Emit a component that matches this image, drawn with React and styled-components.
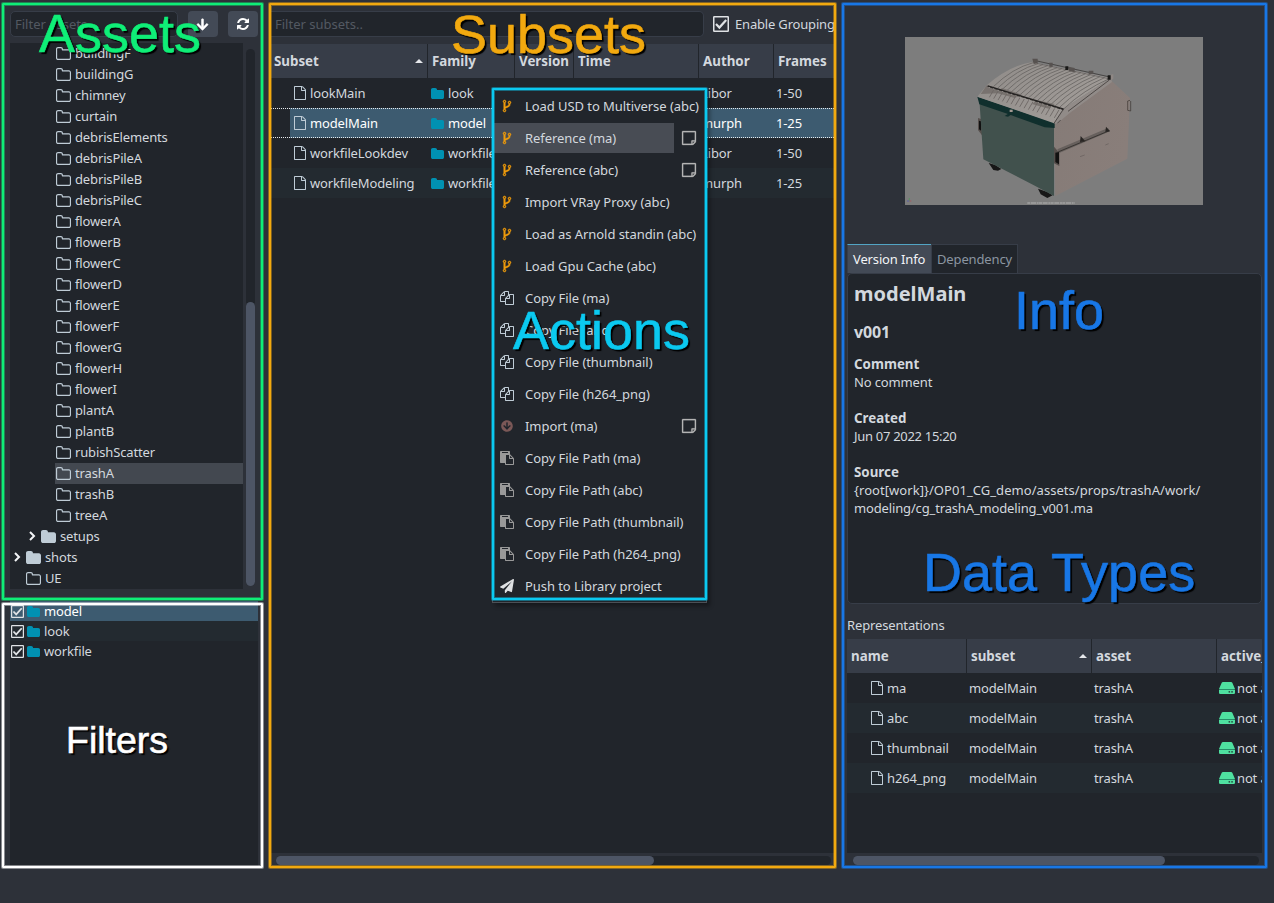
import React from "react";
import styled, { createGlobalStyle, css } from "styled-components";
import { FaArrowCircleDown, FaPaperPlane, FaArrowDown } from "react-icons/fa";

const c = {
  window: "#2d3139",
  view: "#21252b",
  alt: "#232a30",
  header: "#373d48",
  control: "#434a56",
  line: "#373d48",
  text: "#d3d8de",
  muted: "#535962",
  selected: "#3d5b70",
  hover: "#434850",
  icon: "#bfccd6",
  family: "#0091b2",
  scroll: "#4d5565",
};

const Global = createGlobalStyle`
  * { box-sizing: border-box; }
  body {
    margin: 0;
    background: ${c.window};
    color: ${c.text};
    font: 13px/18px "Noto Sans", sans-serif;
    letter-spacing: -0.14px;
    overflow: hidden;
  }
  svg { display: block; flex: none; }
`;

/* ---------- icons ---------- */

const PATHS = {
  folderLine: ["0 64 1664 1408", "M1536 1248V544q0-40-28-68t-68-28H736q-40 0-68-28t-28-68v-64q0-40-28-68t-68-28H224q-40 0-68 28t-28 68v960q0 40 28 68t68 28h1216q40 0 68-28t28-68zm128-704v704q0 92-66 158t-158 66H224q-92 0-158-66T0 1248V288q0-92 66-158T224 64h320q92 0 158 66t66 158v32h672q92 0 158 66t66 158z"],
  folder: ["0 64 1664 1408", "M1664 544v704q0 92-66 158t-158 66H224q-92 0-158-66T0 1248V288q0-92 66-158T224 64h320q92 0 158 66t66 158v32h672q92 0 158 66t66 158z"],
  file: ["0 0 1536 1792", "M1468 380q28 28 48 76t20 88v1152q0 40-28 68t-68 28H96q-40 0-68-28t-28-68V96q0-40 28-68T96 0h896q40 0 88 20t76 48zm-444-244v376h376q-10-29-22-41l-313-313q-12-12-41-22zm384 1528V640H992q-40 0-68-28t-28-68V128H128v1536h1280z"],
  refresh: ["0 0 1536 1536", "M1511 928q0 5-1 7-64 268-268 434.5T764 1536q-146 0-282.5-55T238 1324l-129 129q-19 19-45 19t-45-19T0 1408V960q0-26 19-45t45-19h448q26 0 45 19t19 45-19 45l-137 137q71 66 161 102t187 36q134 0 250-65t186-179q11-17 53-117 8-23 30-23h192q13 0 22.5 9.5t9.5 22.5zm25-800v448q0 26-19 45t-45 19h-448q-26 0-45-19t-19-45 19-45l138-138Q969 256 768 256q-134 0-250 65T332 500q-11 17-53 117-8 23-30 23H50q-13 0-22.5-9.5T18 608v-7q65-268 270-434.5T768 0q146 0 284 55.5T1297 212l130-129q19-19 45-19t45 19 19 45z"],
  fork: ["0 128 1024 1536", "M288 1472q0-40-28-68t-68-28-68 28-28 68 28 68 68 28 68-28 28-68zm0-1152q0-40-28-68t-68-28-68 28-28 68 28 68 68 28 68-28 28-68zm640 128q0-40-28-68t-68-28-68 28-28 68 28 68 68 28 68-28 28-68zm96 0q0 52-26 96.5T928 614q-2 287-226 414-67 38-203 81-128 40-169.5 71T288 1280v26q44 25 70 69.5t26 96.5q0 80-56 136t-136 56-136-56-56-136q0-52 26-96.5T96 1306V486q-44-25-70-69.5T0 320q0-80 56-136t136-56 136 56 56 136q0 52-26 96.5T288 486v497q54-26 154-57 55-17 87.5-29.5t70.5-31 59-39.5 40.5-51 28-69.5T736 614q-44-25-70-69.5T640 448q0-80 56-136t136-56 136 56 56 136z"],
  copy: ["0 0 1792 1792", "M1696 384q40 0 68 28t28 68v1216q0 40-28 68t-68 28H736q-40 0-68-28t-28-68v-288H96q-40 0-68-28t-28-68V640q0-40 20-88t48-76L476 68q28-28 76-48t88-20h416q40 0 68 28t28 68v328q68-40 128-40h416zm-544 213L853 896h299V597zM512 213L213 512h299V213zm196 647l316-316V128H640v416q0 40-28 68t-68 28H128v640h512v-256q0-40 20-88t48-76zm956 804V512h-384v416q0 40-28 68t-68 28H768v640h896z"],
  paste: ["0 0 1792 1792", "M768 1664h896v-640h-416q-40 0-68-28t-28-68V512H768v1152zm256-1440v-64q0-13-9.5-22.5T992 128H288q-13 0-22.5 9.5T256 160v64q0 13 9.5 22.5T288 256h704q13 0 22.5-9.5t9.5-22.5zm256 672h299l-299-299v299zm512 128v672q0 40-28 68t-68 28H736q-40 0-68-28t-28-68v-160H96q-40 0-68-28t-28-68V96q0-40 28-68T96 0h1088q40 0 68 28t28 68v328q21 13 36 28l408 408q28 28 48 76t20 88z"],
  note: ["0 128 1536 1536", "M1400 1280h-248v248q29-10 41-22l185-185q12-12 22-41zm-280-128h288V256H128v1280h896v-288q0-40 28-68t68-28zm416-928v1024q0 40-20 88t-48 76l-184 184q-28 28-76 48t-88 20H96q-40 0-68-28t-28-68V224q0-40 28-68t68-28h1344q40 0 68 28t28 68z"],
};

const Icon = ({ name, w, h, color = c.icon, bold = 0 }) => (
  <svg
    width={w}
    height={h}
    viewBox={PATHS[name][0]}
    fill={color}
    stroke={color}
    strokeWidth={bold}
    overflow="visible"
    preserveAspectRatio="none"
  >
    <path d={PATHS[name][1]} />
  </svg>
);

const Drive = () => (
  <svg width="16" height="12" viewBox="0 0 16 12">
    <path fill="#4fe0a0" d="M4 0h8q.9 0 1.3.8L16 7H0L2.700.8Q3.100 0 4 0zM0 8h16v2.700q0 1.300-1.300 1.300H1.300Q0 12 0 10.700z" />
    <path fill="#268c68" d="M.2 7h15.600v1H.2z" />
    <path fill="#21252b" d="M9.600 9.200h1.500v1.300H9.600zM12.300 9.200h1.500v1.300h-1.500z" />
  </svg>
);

const Chevron = () => (
  <svg width="7" height="10" viewBox="0 0 7 10" fill="none" stroke="#f4f5f7" strokeWidth="2">
    <path d="M1 1l4 4-4 4" />
  </svg>
);

const SortArrow = () => (
  <svg width="8" height="4" viewBox="0 0 8 4" fill="#e6e8eb">
    <path d="M4 0l4 4H0z" />
  </svg>
);

const Check = ({ size }) => (
  <svg width={size} height={size} viewBox="0 0 16 16" fill="none" stroke="#dfe2e5">
    <rect x="0.75" y="0.75" width="14.5" height="14.5" strokeWidth="1.5" rx="0.5" />
    <path d="M3 8l3.4 3.6L13.2 4" strokeWidth="2.2" />
  </svg>
);

/* ---------- layout ---------- */

const Window = styled.main`
  position: relative;
  width: 1274px;
  height: 903px;
  padding-left: 10px;
  display: flex;
  background: ${c.window};
  overflow: hidden;
`;

const AssetColumn = styled.section`
  width: 248px;
  height: 867px;
  margin-right: 13px;
  display: flex;
  flex-direction: column;
`;

const SubsetColumn = styled.section`
  width: 564px;
  height: 867px;
  margin-right: 12px;
  display: flex;
  flex-direction: column;
`;

const InfoColumn = styled.section`
  width: 415px;
  height: 867px;
  display: flex;
  flex-direction: column;
`;

const Toolbar = styled.div`
  display: flex;
  align-items: center;
  height: 43px;
  margin-bottom: ${(p) => p.$gap ?? 0}px;
  padding-top: 5px;
  flex: none;
`;

const SearchField = styled.div`
  height: 26px;
  width: ${(p) => p.$w}px;
  flex: none;
  padding-left: 4px;
  border: 1px solid ${c.line};
  border-left-width: ${(p) => (p.$open ? 0 : 1)}px;
  border-radius: ${(p) => (p.$open ? "0 5px 5px 0" : "5px")};
  background: ${c.view};
  color: ${c.muted};
  line-height: 25px;
  letter-spacing: 0;
`;

const ToolButton = styled.div`
  width: 30px;
  height: 26px;
  margin-left: 10px;
  padding-right: ${(p) => p.$shift ?? 0}px;
  border-radius: 4px;
  background: ${c.control};
  display: flex;
  align-items: center;
  justify-content: center;
`;

const GroupToggle = styled.div`
  display: flex;
  align-items: center;
  gap: 6px;
  margin-left: 9px;
  padding-bottom: 1px;
  white-space: nowrap;
  letter-spacing: -0.18px;
`;

/* ---------- asset tree ---------- */

const TreeArea = styled.div`
  display: flex;
  height: 546px;
  gap: 3px;
`;

const Tree = styled.div`
  width: 233px;
  background: ${c.view};
`;

const TreeRow = styled.div`
  display: flex;
  align-items: center;
  height: 21px;
  padding-bottom: 1px;
  margin-left: ${(p) => p.$level * 15}px;
  background: ${(p) => (p.$active ? c.hover : "transparent")};
`;

const Branch = styled.div`
  width: 15px;
  padding-left: 4px;
  margin-left: -15px;
`;

const TreeIcon = styled.div`
  width: 20px;
  padding-left: 1px;
`;

const VScroll = styled.div`
  width: 9px;
  margin: 6px 0 3px;
  padding-top: 253px;
  border-radius: 5px;
  background: ${c.view};
`;

const VHandle = styled.div`
  height: 284px;
  border-radius: 5px;
  background: ${c.scroll};
`;

const FilterList = styled.div`
  margin-top: 12px;
  height: 265px;
  background: ${c.view};
`;

const FilterRow = styled.div`
  display: flex;
  align-items: center;
  height: 20px;
  padding-left: 1px;
  gap: 3px;
  background: ${(p) => p.$bg};
  color: ${(p) => (p.$active ? "#fff" : c.text)};
`;

const FilterName = styled.span`
  margin-left: 1px;
`;

/* ---------- tables ---------- */

const HeaderRow = styled.div`
  display: grid;
  grid-template-columns: ${(p) => p.$cols};
  height: 34px;
  flex: none;
  background: ${c.header};
  overflow: hidden;
`;

const HeaderCell = styled.div`
  display: flex;
  align-items: center;
  justify-content: space-between;
  padding: 0 4px 0 ${(p) => p.$pad ?? 4}px;
  border-right: 1px solid ${c.view};
  font-weight: 700;
  font-size: 13.33px;
  letter-spacing: 0;
  white-space: nowrap;
  overflow: hidden;
  &:last-child { border-right: 0; padding-right: 0; }
`;

const TableBody = styled.div`
  flex: 1;
  background: ${c.view};
`;

const TableRow = styled.div`
  display: grid;
  grid-template-columns: ${(p) => p.$cols};
  height: 30px;
  background: ${(p) => (p.$alt ? c.alt : c.view)};
  ${(p) =>
    p.$selected &&
    css`
      color: #fff;
      background:
        repeating-linear-gradient(90deg, #e8ecef 0 1px, transparent 1px 2px) 0 0 / 100% 1px no-repeat,
        repeating-linear-gradient(90deg, #e8ecef 0 1px, transparent 1px 2px) 0 29px / 100% 1px no-repeat,
        linear-gradient(90deg, ${c.view} 19px, ${c.selected} 19px);
    `}
`;

const Cell = styled.div`
  display: flex;
  align-items: center;
  gap: ${(p) => p.$gap ?? 4}px;
  padding-left: ${(p) => p.$pad ?? 3}px;
  white-space: nowrap;
  overflow: hidden;
`;

const HScroll = styled.div`
  height: 9px;
  flex: none;
  margin: 3px ${(p) => p.$right}px 2px ${(p) => p.$left}px;
  border-radius: 5px;
  background: ${c.view};
`;

const HHandle = styled.div`
  width: ${(p) => p.$w}px;
  height: 9px;
  border-radius: 5px;
  background: ${c.scroll};
`;

/* ---------- version panel ---------- */

const Preview = styled.div`
  height: 244px;
  padding: 37px 0 0 58px;
  flex: none;
`;

const Tabs = styled.div`
  display: flex;
  height: 29px;
  flex: none;
`;

const Tab = styled.div`
  width: ${(p) => p.$w}px;
  padding-left: 5px;
  line-height: 28px;
  white-space: nowrap;
  border-top: 1px solid ${(p) => (p.$active ? "#52a4c4" : c.line)};
  border-left: 1px solid ${c.line};
  border-right: ${(p) => (p.$active ? 0 : 1)}px solid ${c.line};
  background: ${(p) => (p.$active ? c.control : c.view)};
  color: ${(p) => (p.$active ? "#f2f4f6" : "#8b95a1")};
`;

const VersionInfo = styled.div`
  height: 331px;
  flex: none;
  padding: 6px 6px 0;
  border: 1px solid ${c.line};
  border-radius: 5px;
  background: ${c.view};
`;

const Title = styled.h1`
  margin: 0;
  font-size: 20px;
  line-height: 27px;
  letter-spacing: 0;
`;

const Subtitle = styled.h2`
  margin: 14px 0 12px;
  font-size: 16px;
  line-height: 22px;
`;

const Field = styled.div`
  margin-bottom: 18px;
  letter-spacing: ${(p) => p.$track ?? -0.14}px;
  b { display: block; font-size: 13.33px; letter-spacing: 0; }
`;

const Path = styled.div`
  letter-spacing: ${(p) => p.$track}px;
`;

const SectionLabel = styled.div`
  height: 35px;
  flex: none;
  line-height: 42px;
`;

/* ---------- context menu and callouts ---------- */

const Menu = styled.div`
  position: absolute;
  left: 492px;
  top: 88px;
  width: 215px;
  height: 515px;
  padding: 1px 1px 0;
  border: 1px solid #4b5057;
  background: ${c.view};
  box-shadow: 3px 3px 4px rgba(0, 0, 0, 0.35);
  letter-spacing: -0.06px;
`;

const MenuRow = styled.div`
  display: flex;
  align-items: center;
  height: 32px;
  padding-right: 9px;
`;

const MenuLabel = styled.div`
  flex: 1;
  display: flex;
  align-items: center;
  height: 30px;
  margin-right: ${(p) => (p.$note ? 8 : -9)}px;
  white-space: nowrap;
  background: ${(p) => (p.$active ? "#484c54" : "transparent")};
`;

const MenuIcon = styled.div`
  width: 31px;
  padding-left: ${(p) => p.$pad}px;
`;

const Frame = styled.div`
  position: absolute;
  left: ${(p) => p.$x}px;
  top: ${(p) => p.$y}px;
  width: ${(p) => p.$w}px;
  height: ${(p) => p.$h}px;
  border: 2px solid ${(p) => p.$color};
  border-radius: 1px;
  box-shadow: 0 0 0 1px ${(p) => p.$color}70, inset 0 0 0 1px ${(p) => p.$color}70;
`;

const Callout = styled.div`
  position: absolute;
  left: ${(p) => p.$x}px;
  top: ${(p) => p.$y}px;
  font: ${(p) => p.$size ?? 54}px/1 "Liberation Sans", Arial, sans-serif;
  letter-spacing: 0;
  color: ${(p) => p.$color};
  -webkit-text-stroke: 0.6px ${(p) => p.$color};
  text-shadow: 2px 2px 1px #000;
  white-space: nowrap;
`;

/* ---------- data ---------- */

const props = [
  "buildingF", "buildingG", "chimney", "curtain", "debrisElements", "debrisPileA", "debrisPileB",
  "debrisPileC", "flowerA", "flowerB", "flowerC", "flowerD", "flowerE", "flowerF", "flowerG",
  "flowerH", "flowerI", "plantA", "plantB", "rubishScatter", "trashA", "trashB", "treeA",
];

const subsets = [
  ["lookMain", "look", "Libor", "1-50"],
  ["modelMain", "model", "murph", "1-25"],
  ["workfileLookdev", "workfile", "Libor", "1-50"],
  ["workfileModeling", "workfile", "murph", "1-25"],
];

const actions = [
  ["fork", "Load USD to Multiverse (abc)"],
  ["fork", "Reference (ma)", true],
  ["fork", "Reference (abc)", true],
  ["fork", "Import VRay Proxy (abc)"],
  ["fork", "Load as Arnold standin (abc)"],
  ["fork", "Load Gpu Cache (abc)"],
  ["copy", "Copy File (ma)"],
  ["copy", "Copy File (abc)"],
  ["copy", "Copy File (thumbnail)"],
  ["copy", "Copy File (h264_png)"],
  ["import", "Import (ma)", true],
  ["paste", "Copy File Path (ma)"],
  ["paste", "Copy File Path (abc)"],
  ["paste", "Copy File Path (thumbnail)"],
  ["paste", "Copy File Path (h264_png)"],
  ["push", "Push to Library project"],
];

const actionIcons = {
  fork: [9, <Icon name="fork" w={8} h={12} color="#f09c0c" bold={60} />],
  copy: [6, <Icon name="copy" w={14} h={14} />],
  paste: [6, <Icon name="paste" w={14} h={14} color="#999" />],
  import: [7, <FaArrowCircleDown size={12} color="#7b5857" />],
  push: [6, <FaPaperPlane size={14} color="#dfe1e3" />],
};

const SUBSET_COLS = "157px 87px 59px 125px 75px 1fr";
const REP_COLS = "120px 125px 125px 1fr";

/* ---------- thumbnail ---------- */

const ribs = Array.from({ length: 17 }, (_, i) => {
  const t = i / 16;
  const x1 = 460 + t * 212, y1 = 260 + t * 66;
  const x2 = 580 + t * 228, y2 = 188 + t * 48;
  return `M${x1} ${y1}Q${x1 + 58} ${y1 - 56} ${x2} ${y2}`;
}).join("");

const teeth = Array.from({ length: 16 }, (_, i) => `M${462 + i * 13} ${268 + i * 4.1}l-14 24`).join("");

const Dumpster = () => (
  <svg width="298" height="168" viewBox="195 111 894 504">
    <defs>
      <linearGradient id="lid" x1="0" y1="0" x2="1" y2="0.6">
        <stop offset="0" stopColor="#8f8b88" />
        <stop offset="1" stopColor="#a29d99" />
      </linearGradient>
      <linearGradient id="side" x1="0" y1="0" x2="1" y2="0.4">
        <stop offset="0" stopColor="#857b77" />
        <stop offset="1" stopColor="#897e7a" />
      </linearGradient>
    </defs>
    <path fill="#7d7d7d" d="M195 111h894v504H195z" />
    <path fill="#171717" d="M446 489l20 6 18 12-10 5-14-2zM594 566l28 10 16 10-16 8-20-11z" />
    <path fill="#57504d" d="M414 354l12 4v48l-12-16z" />
    <path fill="#101010" d="M417 362l6 2v28l-6-4z" />
    <path fill="url(#side)" d="M642 370L812 240l58 54-8 182-216 112z" />
    <path fill="#41514d" d="M418 298l224 74v216l-56-30-156-80z" />
    <path fill="#102f2d" d="M412 290l232 78v16l-30-2-110-40-86-29z" />
    <path fill="#102f2d" d="M494 348l22-14 4 6-16 10z" />
    <path fill="url(#lid)" d="M412 290l28-34Q510 195 578 186l234 48-144 94-26 42z" />
    <path fill="#918b88" d="M668 328l144-94 4 12-126 92-40 34-8-2z" />
    <path fill="none" stroke="#6b6765" strokeWidth="2.600" d={ribs} />
    <path fill="#736d6a" opacity=".85" d="M440 256l42 12-10 12-50 2zM486 264l60 20-22 10-56-16zM590 300l54 12-18 14-50-14z" />
    <path fill="none" stroke="#6b6562" strokeWidth="2.600" d={teeth} />
    <path fill="none" stroke="#252322" strokeWidth="5" d="M443 258l228 70" />
    <path fill="none" stroke="#b0aaa6" strokeWidth="2" strokeDasharray="4 10" d="M446 262l222 68" />
    <path fill="none" stroke="#4f4a48" strokeWidth="3" d="M670 328l-28 42M684 334l124-94M652 370l10-10" />
    <path fill="none" stroke="#3c3a38" strokeWidth="2.500" d="M582 181l228 50" />
    <path fill="none" stroke="#5a5654" strokeWidth="2" d="M590 190l216 46" />
    <path fill="#575250" d="M577 176h16v14l-12 2zM628 188h10v12h-10zM686 200l18 4v12l-16-2zM746 212h14v10h-14z" />
    <path fill="#191817" d="M676 199h9v11h-9zM803 226h10v13h-10z" />
    <path fill="#8e8784" d="M812 224l8-2v14l-8 6z" />
    <path fill="#67605d" d="M652 448l152-64 6 10-154 66z" />
    <path fill="none" stroke="#393532" strokeWidth="3" d="M654 456l154-64" />
    <path fill="#292624" d="M722 408l14 16-16 2zM798 380l12 14-14 2z" />
    <path fill="none" stroke="#655e5a" strokeWidth="2" d="M720 470l14-5M796 435l10-4" />
    <path fill="#544e4b" d="M642 440l16 18v40l-16-8z" />
    <path fill="#121111" d="M646 458l11-2v37l-11-7z" />
    <path fill="none" stroke="#39332f" strokeWidth="2" d="M870 301l-7 2v28l9 2v-30" />
    <path fill="#a39992" d="M509 329h9v7h-9z" />
    <path fill="none" stroke="#b4b4b4" strokeWidth="3" strokeDasharray="9 2 15 2 6 1" d="M562 609h142" />
    <path stroke="#4553ba" strokeWidth="2" d="M201 603h7" />
    <path stroke="#b54a52" strokeWidth="2" d="M208 603h6" />
    <path stroke="#469b54" strokeWidth="2" d="M208 602v-8" />
  </svg>
);

export default function App() {
  return (
    <Window>
      <Global />

      <AssetColumn>
        <Toolbar>
          <SearchField $w={168}>Filter assets..</SearchField>
          <ToolButton $shift={2}><FaArrowDown size={13} color="#fff" stroke="#fff" strokeWidth={20} /></ToolButton>
          <ToolButton><Icon name="refresh" w={12} h={12} color="#fff" /></ToolButton>
        </Toolbar>
        <TreeArea>
          <Tree>
            {props.map((name) => (
              <TreeRow key={name} $level={3} $active={name === "trashA"}>
                <TreeIcon><Icon name="folderLine" w={15} h={13} /></TreeIcon>
                {name}
              </TreeRow>
            ))}
            <TreeRow $level={2}>
              <Branch><Chevron /></Branch>
              <TreeIcon><Icon name="folder" w={15} h={13} /></TreeIcon>
              setups
            </TreeRow>
            <TreeRow $level={1}>
              <Branch><Chevron /></Branch>
              <TreeIcon><Icon name="folder" w={15} h={13} /></TreeIcon>
              shots
            </TreeRow>
            <TreeRow $level={1}>
              <TreeIcon><Icon name="folderLine" w={15} h={13} /></TreeIcon>
              UE
            </TreeRow>
          </Tree>
          <VScroll><VHandle /></VScroll>
        </TreeArea>
        <FilterList>
          {["model", "look", "workfile"].map((name, i) => (
            <FilterRow key={name} $active={i === 0} $bg={[c.selected, c.alt, c.view][i]}>
              <Check size={13} />
              <Icon name="folder" w={13} h={11} color={c.family} />
              <FilterName>{name}</FilterName>
            </FilterRow>
          ))}
        </FilterList>
      </AssetColumn>

      <SubsetColumn>
        <Toolbar $gap={1}>
          <SearchField $w={433} $open>Filter subsets..</SearchField>
          <GroupToggle>
            <Check size={16} />
            Enable Grouping
          </GroupToggle>
        </Toolbar>
        <HeaderRow $cols={SUBSET_COLS}>
          <HeaderCell $pad={3}>Subset<SortArrow /></HeaderCell>
          <HeaderCell>Family</HeaderCell>
          <HeaderCell>Version</HeaderCell>
          <HeaderCell>Time</HeaderCell>
          <HeaderCell>Author</HeaderCell>
          <HeaderCell>Frames</HeaderCell>
        </HeaderRow>
        <TableBody>
          {subsets.map(([name, family, author, frames], i) => (
            <TableRow key={name} $cols={SUBSET_COLS} $alt={i % 2 === 1} $selected={i === 1}>
              <Cell $pad={23}><Icon name="file" w={12} h={14} />{name}</Cell>
              <Cell><Icon name="folder" w={13} h={11} color={c.family} />{family}</Cell>
              <Cell />
              <Cell />
              <Cell $pad={2}>{author}</Cell>
              <Cell $pad={2}>{frames}</Cell>
            </TableRow>
          ))}
        </TableBody>
        <HScroll $left={5} $right={4}><HHandle $w={378} /></HScroll>
      </SubsetColumn>

      <InfoColumn>
        <Preview><Dumpster /></Preview>
        <Tabs>
          <Tab $w={84} $active>Version Info</Tab>
          <Tab $w={87}>Dependency</Tab>
        </Tabs>
        <VersionInfo>
          <Title>modelMain</Title>
          <Subtitle>v001</Subtitle>
          <Field><b>Comment</b>No comment</Field>
          <Field $track={-0.3}><b>Created</b>Jun 07 2022 15:20</Field>
          <Field>
            <b>Source</b>
            <Path $track={0.05}>{"{root[work]}/OP01_CG_demo/assets/props/trashA/work/"}</Path>
            <Path $track={-0.15}>modeling/cg_trashA_modeling_v001.ma</Path>
          </Field>
        </VersionInfo>
        <SectionLabel>Representations</SectionLabel>
        <HeaderRow $cols={REP_COLS}>
          <HeaderCell>name</HeaderCell>
          <HeaderCell>subset<SortArrow /></HeaderCell>
          <HeaderCell>asset</HeaderCell>
          <HeaderCell>active_site</HeaderCell>
        </HeaderRow>
        <TableBody>
          {["ma", "abc", "thumbnail", "h264_png"].map((name, i) => (
            <TableRow key={name} $cols={REP_COLS} $alt={i % 2 === 1}>
              <Cell $pad={24}><Icon name="file" w={12} h={14} />{name}</Cell>
              <Cell $pad={2}>modelMain</Cell>
              <Cell $pad={2}>trashA</Cell>
              <Cell $pad={2} $gap={2}><Drive />not available</Cell>
            </TableRow>
          ))}
        </TableBody>
        <HScroll $left={6} $right={3}><HHandle $w={312} /></HScroll>
      </InfoColumn>

      <Menu>
        {actions.map(([icon, label, note], i) => (
          <MenuRow key={label}>
            <MenuLabel $note={note} $active={i === 1}>
              <MenuIcon $pad={actionIcons[icon][0]}>{actionIcons[icon][1]}</MenuIcon>
              {label}
            </MenuLabel>
            {note && <Icon name="note" w={14} h={14} color="#b5b5b5" bold={30} />}
          </MenuRow>
        ))}
      </Menu>

      <Frame $x={2} $y={3} $w={261} $h={597} $color="#0fee77" />
      <Frame $x={2} $y={603} $w={261} $h={265} $color="#ffffff" />
      <Frame $x={269} $y={3} $w={567} $h={865} $color="#f2a90f" />
      <Frame $x={842} $y={3} $w={425} $h={865} $color="#1877e6" />
      <Frame $x={492} $y={88} $w={215} $h={512} $color="#0bc9f0" />

      <Callout $x={39} $y={6} $color="#0fee77">Assets</Callout>
      <Callout $x={451} $y={7} $color="#f2a90f">Subsets</Callout>
      <Callout $x={513} $y={303} $color="#0bc9f0">Actions</Callout>
      <Callout $x={1014} $y={283} $color="#1877e6">Info</Callout>
      <Callout $x={923} $y={545} $color="#1877e6">Data Types</Callout>
      <Callout $x={66} $y={722} $size={37.5} $color="#ffffff">Filters</Callout>
    </Window>
  );
}
